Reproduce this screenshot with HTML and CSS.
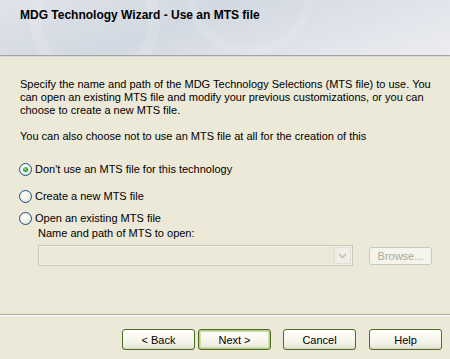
FILE: index.html
```html
<!DOCTYPE html>
<html lang="en">
<head>
  <meta charset="UTF-8">
  <title>MDG Technology Wizard</title>
  <link rel="stylesheet" href="styles.css">
</head>
<body>

<div class="wizard">
  <header class="banner">
    <h1>MDG Technology Wizard - Use an MTS file</h1>
  </header>

  <main class="content">
    <p>Specify the name and path of the MDG Technology Selections (MTS file) to use. You can open an existing MTS file and modify your previous customizations, or you can choose to create a new MTS file.</p>
    <p>You can also choose not to use an MTS file at all for the creation of this</p>

    <div class="options">
      <label class="radio first"><span class="dot checked"></span>Don't use an MTS file for this technology</label>
      <label class="radio second"><span class="dot"></span>Create a new MTS file</label>
      <label class="radio third"><span class="dot"></span>Open an existing MTS file</label>

      <div class="open-path">
        <div class="field-label">Name and path of MTS to open:</div>
        <div class="path-row">
          <div class="combo">
            <div class="combo-btn">
              <svg width="9" height="6" viewBox="0 0 9 6"><path d="M1 1 L4.5 4.5 L8 1" fill="none" stroke="#c4c2b6" stroke-width="1.6"/></svg>
            </div>
          </div>
          <button class="btn browse" disabled>Browse...</button>
        </div>
      </div>
    </div>
  </main>

  <footer class="buttons">
    <button class="btn">&lt; Back</button>
    <button class="btn default">Next &gt;</button>
    <button class="btn cancel">Cancel</button>
    <button class="btn help">Help</button>
  </footer>
</div>

</body>
</html>
```

FILE: styles.css
```css
* {
  box-sizing: border-box;
  margin: 0;
  padding: 0;
}

body {
  font-family: 'Liberation Sans', Arial, sans-serif;
  font-size: 11px;
  color: #000;
  background: #ece9d8;
}

.wizard {
  width: 450px;
  height: 359px;
  display: flex;
  flex-direction: column;
  overflow: hidden;
}

.banner {
  height: 56px;
  flex: none;
  padding: 8px 0 0 20px;
  border-bottom: 1px solid #a3a3a3;
  box-shadow: 0 1px 0 #d8d8d8;
  background:
    radial-gradient(circle at 95px 20px, transparent 52px, rgba(255,255,255,0.13) 54px, rgba(255,255,255,0.13) 64px, transparent 66px),
    radial-gradient(circle at 250px -10px, transparent 55px, rgba(255,255,255,0.1) 57px, rgba(255,255,255,0.1) 64px, transparent 66px),
    linear-gradient(160deg, #dfe3ea 0%, #d3d9e2 40%, #ecedf1 100%);
}

.banner h1 {
  font-size: 12px;
  font-weight: bold;
  line-height: 14px;
  color: #000;
}

.content {
  flex: 1;
  padding: 22px 13px 0 20px;
}

.content p {
  line-height: 13px;
  margin-bottom: 13px;
}

.options {
  margin-left: -1px;
  padding-top: 7px;
}

.radio {
  display: flex;
  align-items: center;
  gap: 3px;
  height: 13px;
  line-height: 13px;
}

.radio.second {
  margin-top: 14px;
}

.radio.third {
  margin-top: 9px;
}

.dot {
  width: 13px;
  height: 13px;
  border-radius: 50%;
  border: 1px solid #1c5180;
  background: radial-gradient(circle at 40% 35%, #ffffff 0%, #f2f1ea 50%, #d8d5c4 100%);
  display: flex;
  align-items: center;
  justify-content: center;
  flex: none;
}

.dot.checked::after {
  content: '';
  width: 5px;
  height: 5px;
  border-radius: 50%;
  background: radial-gradient(circle at 40% 35%, #8ee28e 0%, #29a229 60%, #1b801b 100%);
}

.open-path {
  padding-left: 19px;
  padding-top: 2px;
}

.field-label {
  line-height: 13px;
  height: 13px;
}

.path-row {
  display: flex;
  align-items: center;
  gap: 16px;
  margin-top: 5px;
}

.combo {
  width: 315px;
  height: 21px;
  border: 1px solid #c9c7ba;
  box-shadow: inset 0 0 0 1px #f4f2e8;
  background: #ebe8d7;
  display: flex;
  justify-content: flex-end;
  padding: 1px;
}

.combo-btn {
  width: 17px;
  height: 17px;
  background: #f0efe7;
  border: 1px solid #e1dfd3;
  display: flex;
  align-items: center;
  justify-content: center;
}

.btn {
  font-family: 'Liberation Sans', Arial, sans-serif;
  font-size: 11px;
  color: #000;
  width: 73px;
  height: 21px;
  border: 1px solid #4d6d22;
  border-radius: 3px;
  background: linear-gradient(#fffffb 0%, #f6f5ec 60%, #ebe9db 88%, #d8d5c3 100%);
}

.btn.default {
  box-shadow: inset 0 0 0 1px #b6c98f, inset 0 0 0 2px #d3deb3;
}

.btn.browse {
  width: 63px;
  height: 18px;
  color: #aca899;
  border-color: #cac8bb;
  background: #f5f4ea;
}

.buttons {
  flex: none;
  height: 45px;
  border-top: 1px solid #aca899;
  box-shadow: inset 0 1px 0 #fff;
  display: flex;
  justify-content: flex-end;
  align-items: flex-start;
  padding: 14px 8px 0 0;
}

.buttons .default {
  margin-left: 3px;
}

.buttons .cancel {
  margin-left: 12px;
}

.buttons .help {
  margin-left: 13px;
}
```
